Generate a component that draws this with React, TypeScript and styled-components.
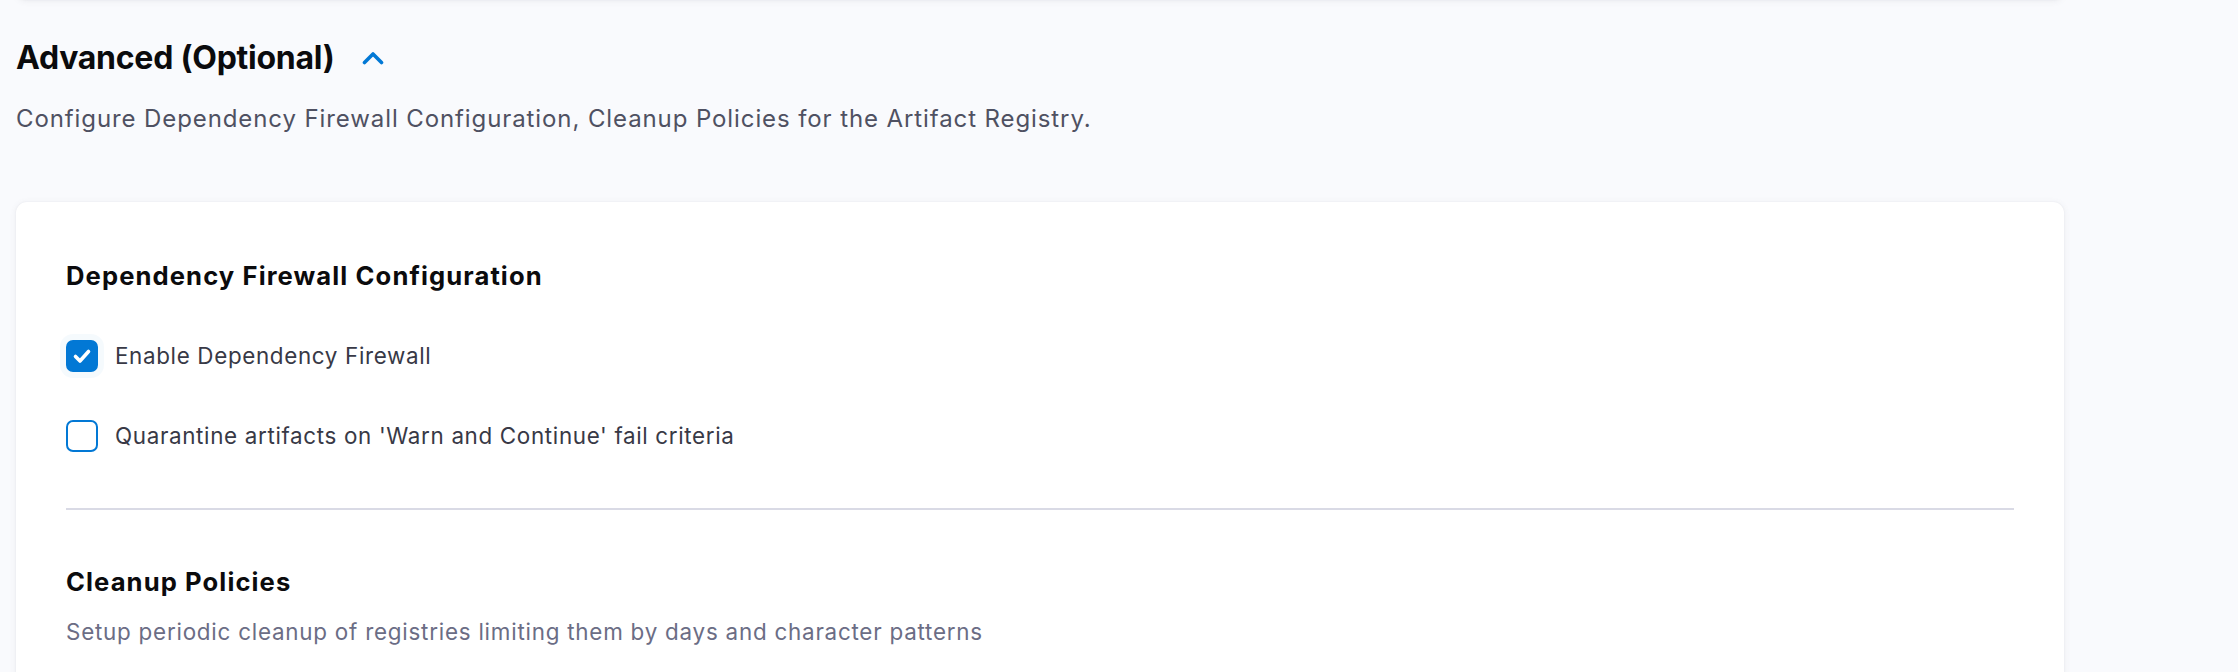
import React, { useState } from 'react'
import styled, { createGlobalStyle } from 'styled-components'

const GlobalStyle = createGlobalStyle`
  html, body {
    margin: 0;
    padding: 0;
    background: #f9fafd;
    font-family: Inter, 'Noto Sans', sans-serif;
    -webkit-font-smoothing: antialiased;
  }
`

const Page = styled.div`
  width: 2048px;
  padding: 0 174px 0 16px;
  overflow: hidden;
  height: 672px;
`

const PrevCard = styled.div`
  height: 40px;
  margin-top: -40px;
  background: #fff;
  border-radius: 10px;
  box-shadow: 0 0 2px rgba(40, 41, 61, 0.06), 0 1px 6px rgba(96, 97, 112, 0.1);
`

const SectionHead = styled.div`
  display: flex;
  align-items: center;
  gap: 27px;
  margin-top: 38px;
`

const Title = styled.h2`
  margin: 0;
  font-size: 32px;
  line-height: 40px;
  font-weight: 700;
  letter-spacing: -0.25px;
  color: #0b0b0d;
`

const Toggle = styled.button`
  display: flex;
  align-items: center;
  padding: 0;
  border: 0;
  background: none;
  cursor: pointer;
`

const Lead = styled.p`
  margin: 25px 0 0;
  font-size: 24px;
  line-height: 32px;
  letter-spacing: 0.9px;
  color: #4f5162;
`

const Card = styled.div`
  margin-top: 67px;
  background: #fff;
  border-radius: 11px;
  padding: 58px 50px 60px;
  box-shadow: 0 0 2px rgba(40, 41, 61, 0.06), 0 1px 6px rgba(96, 97, 112, 0.1);
`

const Heading = styled.h3`
  margin: 0;
  font-size: 25.6px;
  line-height: 32px;
  font-weight: 700;
  letter-spacing: 1.1px;
  color: #0b0b0d;
`

const Options = styled.div`
  display: flex;
  flex-direction: column;
  gap: 48px;
  margin-top: 48px;
`

const Option = styled.label`
  display: flex;
  align-items: center;
  gap: 17px;
  cursor: pointer;
`

const Box = styled.span<{ $checked: boolean }>`
  box-sizing: border-box;
  width: 32px;
  height: 32px;
  border-radius: 7px;
  display: flex;
  align-items: center;
  justify-content: center;
  background: ${({ $checked }) => ($checked ? '#0278d5' : '#fff')};
  border: 2.5px solid #0278d5;
  box-shadow: ${({ $checked }) =>
    $checked ? '0 0 0 6px rgba(2, 120, 213, 0.04)' : 'none'};
`

const OptionText = styled.span`
  font-size: 22.4px;
  line-height: 32px;
  letter-spacing: 0.66px;
  color: #383946;
`

const Divider = styled.hr`
  margin: 56px 0 0;
  border: 0;
  height: 2px;
  background: #d9dae5;
`

const SubHeading = styled(Heading)`
  margin-top: 56px;
`

const Hint = styled.p`
  margin: 18px 0 0;
  font-size: 22.4px;
  line-height: 32px;
  letter-spacing: 0.77px;
  color: #6b6d85;
`

function Checkbox({ checked, label, onToggle }: { checked: boolean; label: string; onToggle: () => void }) {
  return (
    <Option onClick={onToggle}>
      <Box $checked={checked}>
        {checked && (
          <svg width="22" height="22" viewBox="0 0 22 22">
            <polyline points="4.5,11.5 9,16 17.5,6.5" fill="none" stroke="#fff" strokeWidth="3.6" strokeLinecap="round" strokeLinejoin="round" />
          </svg>
        )}
      </Box>
      <OptionText>{label}</OptionText>
    </Option>
  )
}

export default function App() {
  const [firewall, setFirewall] = useState(true)
  const [quarantine, setQuarantine] = useState(false)

  return (
    <>
      <GlobalStyle />
      <Page>
        <PrevCard />
        <SectionHead>
          <Title>Advanced (Optional)</Title>
          <Toggle aria-label="collapse">
            <svg width="22" height="14" viewBox="0 0 22 14">
              <polyline points="2.5,11.5 11,3 19.5,11.5" fill="none" stroke="#0278d5" strokeWidth="3.6" strokeLinecap="round" strokeLinejoin="round" />
            </svg>
          </Toggle>
        </SectionHead>
        <Lead>Configure Dependency Firewall Configuration, Cleanup Policies for the Artifact Registry.</Lead>
        <Card>
          <Heading>Dependency Firewall Configuration</Heading>
          <Options>
            <Checkbox checked={firewall} label="Enable Dependency Firewall" onToggle={() => setFirewall(!firewall)} />
            <Checkbox
              checked={quarantine}
              label="Quarantine artifacts on 'Warn and Continue' fail criteria"
              onToggle={() => setQuarantine(!quarantine)}
            />
          </Options>
          <Divider />
          <SubHeading>Cleanup Policies</SubHeading>
          <Hint>Setup periodic cleanup of registries limiting them by days and character patterns</Hint>
        </Card>
      </Page>
    </>
  )
}
